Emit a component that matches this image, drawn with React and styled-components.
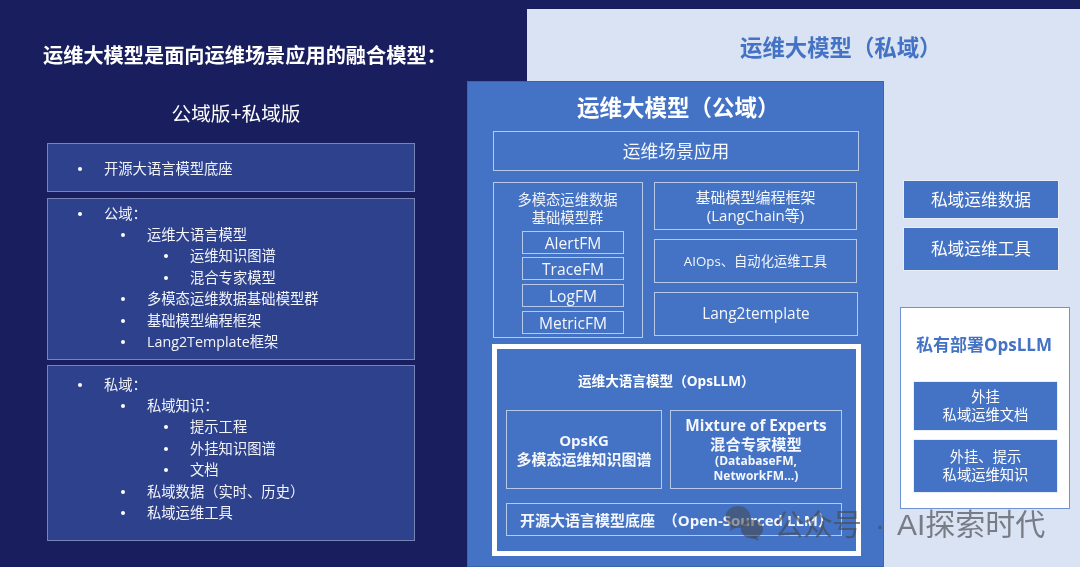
import React from "react";
import styled, { createGlobalStyle } from "styled-components";

const LP = "\uFF08";
const RP = "\uFF09";
const CO = "\uFF1A";

const Global = createGlobalStyle`
  html, body { margin: 0; padding: 0; background: #181e5e; }
  body { font-family: "Open Sans", "Noto Sans CJK SC", sans-serif; }
  * { box-sizing: border-box; }
  ul { margin: 0; padding: 0; list-style: none; }
`;

const Slide = styled.div`
  position: relative;
  width: 1080px;
  height: 567px;
  overflow: hidden;
  background: #181e5e;
  display: grid;
  grid-template-columns: 467px 60px 357px 196px;
  grid-template-rows: 9px 72px 486px;
  color: #fff;
  filter: blur(0.3px);
`;

const Overview = styled.section`
  grid-column: 1;
  grid-row: 1 / 4;
  padding: 42px 0 0 47px;
`;
const Headline = styled.h1`
  margin: 0 0 0 -4px;
  font-size: 20.2px;
  line-height: 26px;
  font-weight: 700;
  white-space: nowrap;
`;
const Subhead = styled.h2`
  margin: 33px 0 16px 5px;
  width: 368px;
  text-align: center;
  font-size: 19.6px;
  line-height: 26px;
  font-weight: 400;
`;
const ListCard = styled.ul`
  width: 368px;
  height: ${(p) => p.$h}px;
  margin-bottom: ${(p) => p.$gap}px;
  padding-top: ${(p) => p.$pad}px;
  background: #2d418c;
  border: 1px solid #7684b6;
`;
const Item = styled.li`
  height: 21.45px;
  line-height: 21.45px;
  font-size: 14.3px;
  white-space: nowrap;
  color: #f2f4fa;
  padding-left: ${(p) => 30 + p.$level * 43}px;
  &::before {
    content: "";
    display: inline-block;
    width: 4px;
    height: 4px;
    border-radius: 50%;
    background: #fff;
    margin-right: 22px;
    vertical-align: 3px;
  }
`;

const PrivatePanel = styled.section`
  grid-column: 3 / 5;
  grid-row: 2 / 4;
  background: #dae3f3;
  padding: 24px 0 0 213px;
`;
const PrivateTitle = styled.h2`
  margin: 0;
  color: #4472c4;
  font-size: 22.4px;
  line-height: 30px;
  font-weight: 700;
  white-space: nowrap;
`;
const PrivateSide = styled.div`
  margin: 117px 0 0 160px;
  width: 170px;
  display: flex;
  flex-direction: column;
`;
const SolidBox = styled.div`
  background: #4472c4;
  color: #fff;
  display: flex;
  align-items: center;
  justify-content: center;
  text-align: center;
  border: 1px solid #e9eff9;
  font-size: ${(p) => p.$size || 16.7}px;
  line-height: ${(p) => p.$lh || 20}px;
  width: ${(p) => p.$w}px;
  height: ${(p) => p.$h}px;
  margin: ${(p) => p.$m || 0};
`;
const DeployCard = styled.div`
  width: 170px;
  height: 202px;
  margin-top: 36px;
  background: #fff;
  border: 1px solid #6f93d2;
  display: flex;
  flex-direction: column;
  padding: 0 0 0 12px;
`;
const DeployTitle = styled.h3`
  margin: 25px 0 24px 3px;
  color: #4472c4;
  font-size: 17px;
  line-height: 24px;
  font-weight: 700;
  white-space: nowrap;
`;

const PublicPanel = styled.section`
  grid-column: 2 / 4;
  grid-row: 3;
  z-index: 1;
  background: #4472c4;
  border: 1px solid #3a64ad;
  padding: 0 0 0 25px;
  display: flex;
  flex-direction: column;
`;
const PublicTitle = styled.h2`
  margin: 0;
  height: 49px;
  padding: 11px 0 0 84px;
  font-size: 22.5px;
  line-height: 30px;
  font-weight: 700;
  white-space: nowrap;
`;
const LineBox = styled.div`
  border: ${(p) => p.$b || 1.5}px solid #b6c9e9;
  display: flex;
  align-items: center;
  justify-content: center;
  flex-direction: column;
  text-align: center;
  font-size: ${(p) => p.$size || 14.5}px;
  line-height: ${(p) => p.$lh || 18}px;
  font-weight: ${(p) => p.$weight || 400};
  width: ${(p) => p.$w}px;
  height: ${(p) => p.$h}px;
  margin: ${(p) => p.$m || 0};
  padding-left: ${(p) => p.$pl || 0}px;
  color: #f4f7fc;
  white-space: pre;
`;
const MiddleRow = styled.div`
  display: flex;
  gap: 11px;
  margin-top: 11px;
  height: 156px;
`;
const ModelGroup = styled.div`
  width: 150px;
  height: 156px;
  border: 1.5px solid #b6c9e9;
  display: flex;
  flex-direction: column;
  align-items: flex-start;
  padding: 0 0 0 28px;
`;
const GroupTitle = styled.div`
  margin: 8px 0 4px -28px;
  width: 147px;
  text-align: center;
  font-size: 14.3px;
  line-height: 18px;
  color: #f0f4fb;
`;
const ToolStack = styled.div`
  display: flex;
  flex-direction: column;
  gap: 9px;
`;
const CoreFrame = styled.div`
  width: 369px;
  height: 212px;
  margin: 6px 0 0 -1px;
  border: 5px solid #fff;
  padding-left: 9px;
  display: flex;
  flex-direction: column;
`;
const CoreLabel = styled.div`
  height: 61px;
  padding: 22px 0 0 72px;
  font-size: 13.6px;
  line-height: 20px;
  font-weight: 700;
  white-space: nowrap;
`;
const CoreRow = styled.div`
  display: flex;
  gap: 8px;
`;
const Fine = styled.span`
  font-size: 12px;
  line-height: 14.5px;
`;

const Watermark = styled.div`
  position: absolute;
  z-index: 2;
  left: 725px;
  top: 505px;
  height: 40px;
  display: flex;
  align-items: center;
  color: rgba(72, 75, 82, 0.68);
  font-family: "Liberation Sans", "Noto Sans CJK SC", sans-serif;
  font-size: 30px;
  line-height: 40px;
  white-space: nowrap;
`;
const WatermarkIcon = styled.svg`
  width: 40px;
  height: 38px;
  margin: -4px 9px 0 0;
  flex: none;
`;
const Spaced = styled.span`
  letter-spacing: ${(p) => p.$ls || 0}px;
  margin-right: ${(p) => p.$m || 0}px;
`;

const publicItems = [
  [0, `公域${CO}`], [1, "运维大语言模型"], [2, "运维知识图谱"], [2, "混合专家模型"],
  [1, "多模态运维数据基础模型群"], [1, "基础模型编程框架"], [1, "Lang2Template框架"],
];
const privateItems = [
  [0, `私域${CO}`], [1, `私域知识${CO}`], [2, "提示工程"], [2, "外挂知识图谱"], [2, "文档"],
  [1, `私域数据${LP}实时、历史${RP}`], [1, "私域运维工具"],
];
const renderItems = (items) => items.map(([level, text]) => <Item key={text} $level={level}>{text}</Item>);

export default function App() {
  return (
    <Slide>
      <Global />
      <Overview>
        <Headline>{`运维大模型是面向运维场景应用的融合模型${CO}`}</Headline>
        <Subhead>公域版+私域版</Subhead>
        <ListCard $h={49} $gap={6} $pad={14}><Item $level={0}>开源大语言模型底座</Item></ListCard>
        <ListCard $h={162} $gap={5} $pad={3.5}>{renderItems(publicItems)}</ListCard>
        <ListCard $h={176} $gap={0} $pad={7.5}>{renderItems(privateItems)}</ListCard>
      </Overview>

      <PrivatePanel>
        <PrivateTitle>{`运维大模型${LP}私域${RP}`}</PrivateTitle>
        <PrivateSide>
          <SolidBox $w={156} $h={39} $m="0 0 8px 3px">私域运维数据</SolidBox>
          <SolidBox $w={156} $h={44} $m="0 0 0 3px">私域运维工具</SolidBox>
          <DeployCard>
            <DeployTitle>私有部署OpsLLM</DeployTitle>
            <SolidBox $w={145} $h={50} $size={14.3} $lh={18} $m="0 0 8px">外挂<br />私域运维文档</SolidBox>
            <SolidBox $w={145} $h={54} $size={14.3} $lh={18}>外挂、提示<br />私域运维知识</SolidBox>
          </DeployCard>
        </PrivateSide>
      </PrivatePanel>

      <PublicPanel>
        <PublicTitle>{`运维大模型${LP}公域${RP}`}</PublicTitle>
        <LineBox $w={366} $h={40} $size={17.8}>运维场景应用</LineBox>
        <MiddleRow>
          <ModelGroup>
            <GroupTitle>多模态运维数据<br />基础模型群</GroupTitle>
            <LineBox $w={102} $h={23} $size={15.6}>AlertFM</LineBox>
            <LineBox $w={102} $h={23} $size={15.6} $m="3px 0 0">TraceFM</LineBox>
            <LineBox $w={102} $h={23} $size={15.6} $m="4px 0 0">LogFM</LineBox>
            <LineBox $w={102} $h={23} $size={15.6} $m="4px 0 0">MetricFM</LineBox>
          </ModelGroup>
          <ToolStack>
            <LineBox $w={203} $h={48} $size={15} $lh={18}>基础模型编程框架<br />(LangChain等)</LineBox>
            <LineBox $w={203} $h={44} $size={13.3}>AIOps、自动化运维工具</LineBox>
            <LineBox $w={204} $h={44} $size={15.4}>Lang2template</LineBox>
          </ToolStack>
        </MiddleRow>
        <CoreFrame>
          <CoreLabel>{`运维大语言模型${LP}OpsLLM${RP}`}</CoreLabel>
          <CoreRow>
            <LineBox $b={1} $w={156} $h={79} $size={15} $lh={19} $weight={700}>OpsKG<br />多模态运维知识图谱</LineBox>
            <LineBox $b={1} $w={172} $h={79} $size={15.3} $lh={19} $weight={700}>
              Mixture of Experts<br />混合专家模型<Fine>(DatabaseFM,</Fine><Fine>NetworkFM…)</Fine>
            </LineBox>
          </CoreRow>
          <LineBox $b={1} $w={336} $h={33} $m="14px 0 0" $pl={5} $size={15} $weight={700}>{`开源大语言模型底座  ${LP}Open-Sourced LLM${RP}`}</LineBox>
        </CoreFrame>
      </PublicPanel>

      <Watermark>
        <WatermarkIcon viewBox="0 0 40 38" aria-hidden="true">
          <ellipse cx="13" cy="13" rx="12.5" ry="11" fill="rgba(70,72,80,.55)" />
          <path d="M6 21 L5 27 L12 23 Z" fill="rgba(70,72,80,.55)" />
          <ellipse cx="27" cy="25" rx="11" ry="9.5" fill="rgba(70,72,80,.6)" />
          <path d="M31 32 L34 37 L25 33 Z" fill="rgba(70,72,80,.6)" />
        </WatermarkIcon>
        <Spaced $ls={-1} $m={14}>公众号</Spaced>
        <Spaced $m={12}>·</Spaced>
        <span>AI探索时代</span>
      </Watermark>
    </Slide>
  );
}
